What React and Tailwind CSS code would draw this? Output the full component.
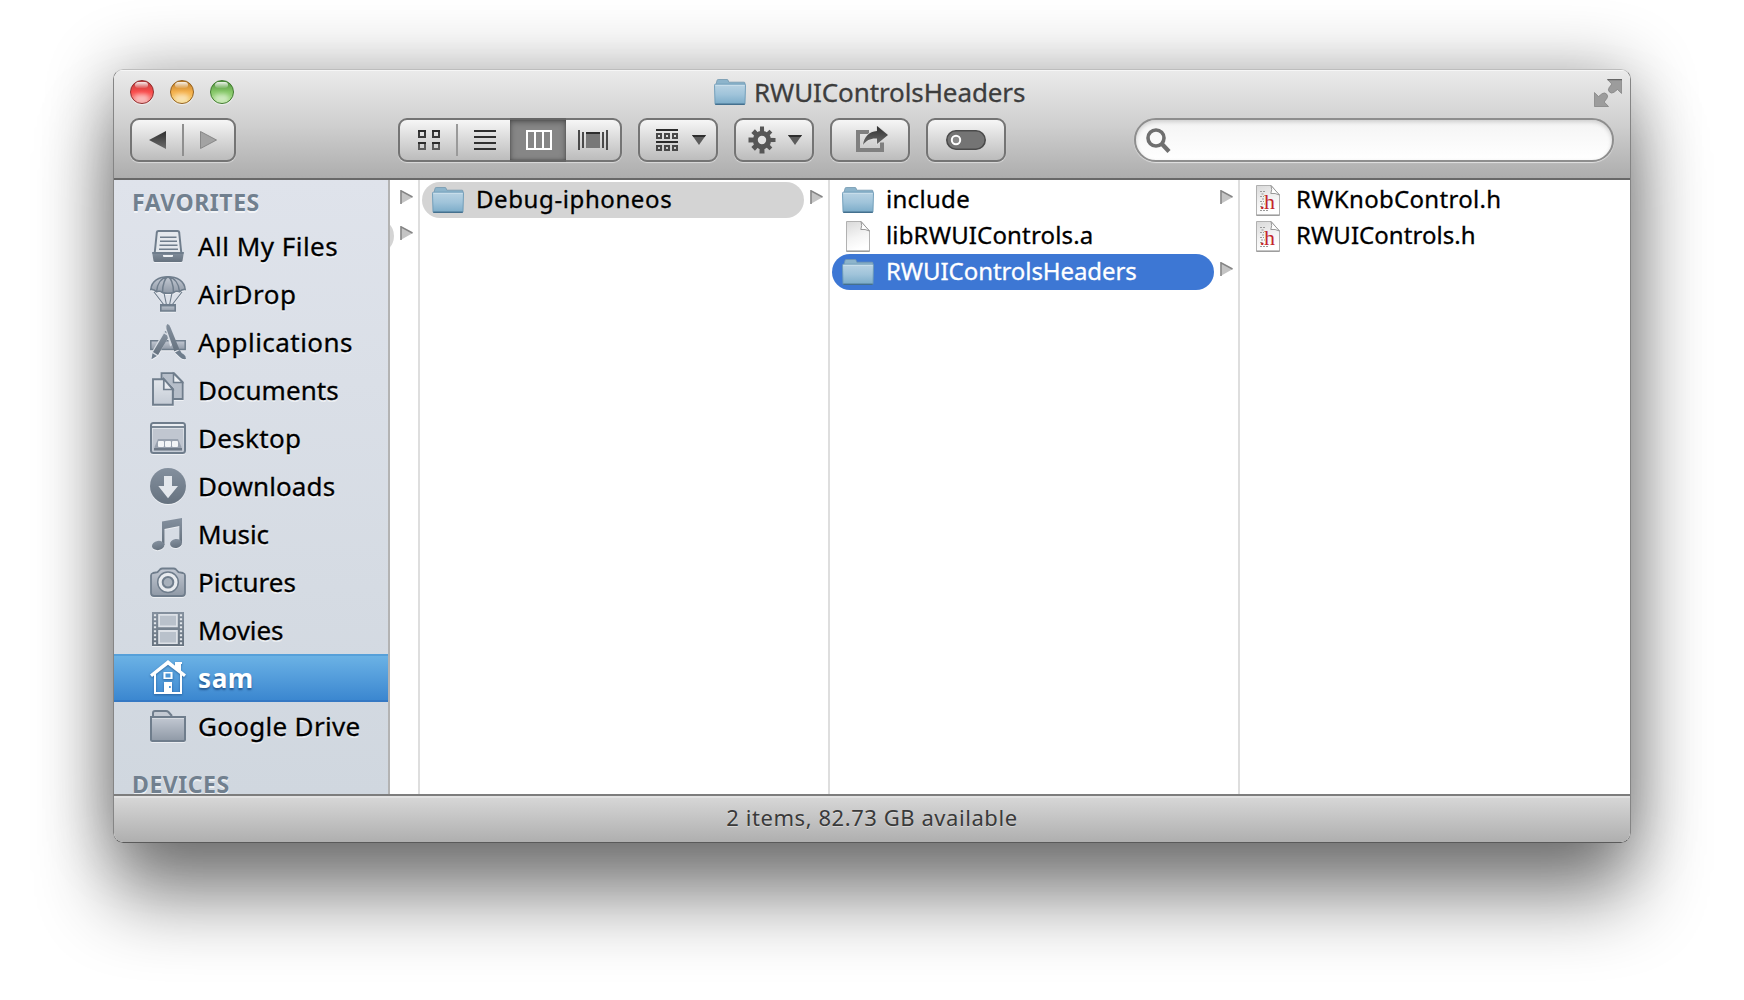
import React from "react";

const INK = "#6f7d8c";

/* ---------- sidebar icons ---------- */

function SideIcon({ children }) {
  return (
    <svg
      viewBox="0 0 36 36"
      className="size-9 shrink-0 overflow-visible drop-shadow-[0_1.5px_0_rgba(255,255,255,0.55)]"
      fill="none"
      stroke={INK}
      strokeWidth="2"
    >
      <defs>
        <linearGradient id="steel" x1="0" y1="0" x2="0" y2="1">
          <stop offset="0" stopColor="#c3c9d3" />
          <stop offset="1" stopColor="#8f99a6" />
        </linearGradient>
        <linearGradient id="ink" x1="0" y1="0" x2="0" y2="1">
          <stop offset="0" stopColor="#84909e" />
          <stop offset="1" stopColor="#66727f" />
        </linearGradient>
        <linearGradient id="pale" x1="0" y1="0" x2="0" y2="1">
          <stop offset="0" stopColor="#e3e7ec" />
          <stop offset="1" stopColor="#c4cbd5" />
        </linearGradient>
      </defs>
      {children}
    </svg>
  );
}

const AllFiles = () => (
  <SideIcon>
    <path d="M4.800 24 6.800 4.500Q7 3 8.500 3h19Q29 3 29.200 4.500L31.200 24" fill="#e4e8ed" />
    <path d="M10 9.200h16.500M10 13.200h17M9.500 17.200h18M9 21.200h19" strokeWidth="1.500" />
    <path d="M2 24h32l-1.500 9q-.2 1-1.500 1H5q-1.300 0-1.500-1z" fill="url(#ink)" stroke="none" />
    <path d="M2.500 25h31" />
    <path d="M13 27h10v1q0 1-1 1h-8q-1 0-1-1z" fill="#eef1f4" stroke="none" />
  </SideIcon>
);

const AirDrop = () => (
  <SideIcon>
    <path d="M4 16 14 29M14 17l2.500 12M22 17l-2.500 12M32 16 22 29" strokeWidth="1.200" />
    <path
      d="M.8 13.500C1.500 5 9 .8 18 .8S34.500 5 35.200 13.500q-2.700-.6-5.700 2.300-3.500-1.300-6 .8-5.500 1.400-11 0-2.500-2.100-6-.8-3-2.900-5.700-2.300z"
      fill="url(#steel)"
      strokeWidth="1.600"
    />
    <path d="M6.500 15.800C7 8 11 2 18 .8c7 1.200 11 7.200 11.500 15M12.500 16.600C12.500 8 15 2 18 .8c3 1.200 5.500 7.200 5.500 15.800" strokeWidth="1.500" />
    <path d="M10.800 29h14.400v6H10.800z" fill="url(#steel)" strokeWidth="1.600" />
    <path d="M10 29.200h16" strokeWidth="2.500" />
  </SideIcon>
);

const Applications = () => (
  <SideIcon>
    <path d="M.8 16.800h34.400v8.800H.8z" fill="url(#steel)" strokeWidth="1.500" />
    <path d="M13.500 7.500q2-2.300 5.500 1l1 2-12 21-6.600 4 .4-7.500z" fill="#d8dde4" stroke="none" />
    <path d="m14 9.500 5 3-11 18.500-5-3z" fill="url(#ink)" stroke="none" />
    <path d="M14.600 8q1.200-1.600 3.600-.4t1.600 3.700z" fill={INK} stroke="none" />
    <path d="m2.500 29.300 4.300 2.600-5.300 3.300z" fill={INK} stroke="none" />
    <path d="M16 1 24 18l-3 2z" fill="#d8dde4" stroke="#d8dde4" strokeWidth="3" />
    <path d="M17.300 0q2.200.4 3.200 3.500l8.700 21.300-4.800 2.600L16.500 5Q15.600 2 17.300 0z" fill="url(#ink)" stroke="none" />
    <path d="m25 28.600 4.900-2.600q1.200 3.300 4 4.600 2 1.500 2.100 4.400-3.500.7-6-1.800z" fill={INK} stroke="none" />
  </SideIcon>
);

const Documents = () => (
  <SideIcon>
    <path d="M11.500 7V1.200h12.500L32.700 10v17h-10V17L13 7.500z" fill="#b6bec9" strokeWidth="1.800" />
    <path d="M23.500 1.500v9h9z" fill="#eef1f4" strokeWidth="1.500" />
    <path d="M3 7.200h11L22.800 17v15.800H3z" fill="url(#pale)" strokeWidth="1.900" />
    <path d="M13.800 7v10.500h9z" fill="#e8ebf0" strokeWidth="1.700" />
  </SideIcon>
);

const Desktop = () => (
  <SideIcon>
    <rect x="1" y="3" width="34" height="30" rx="2.500" fill="url(#pale)" />
    <path d="M2 7h32" strokeWidth="1.800" />
    <path d="M2.500 5h31" stroke="#eef1f4" strokeWidth="1.600" />
    <rect x="3" y="9" width="30" height="22" fill="#c0c6d0" stroke="none" />
    <path d="M8 19h20l3.500 8v2h-27v-2z" fill="#98a1ae" stroke="none" />
    <path d="M4 28h28v2.500H4z" fill="#6f7a88" stroke="none" />
    <g fill="#f2f4f6" stroke="none">
      <rect x="8" y="21" width="6" height="6" rx="1" />
      <rect x="15" y="21" width="6" height="6" rx="1" />
      <rect x="22" y="21" width="6" height="6" rx="1" />
    </g>
  </SideIcon>
);

const Downloads = () => (
  <SideIcon>
    <circle cx="18" cy="18" r="18" fill="url(#ink)" stroke="none" />
    <path d="M14 8h8v10h6L18 30.200 8.300 18H14z" fill="#e3e7ec" stroke="none" />
  </SideIcon>
);

const Music = () => (
  <SideIcon>
    <g fill="url(#ink)" stroke="none">
      <path d="M12 5.500 32 2v7.500L14.500 13v16H12z" />
      <path d="M29.300 4H32v23h-2.700z" />
      <ellipse cx="8.200" cy="29.500" rx="6.300" ry="4.600" transform="rotate(-8 8.200 29.500)" />
      <ellipse cx="26" cy="27.500" rx="6" ry="4.500" transform="rotate(-8 26 27.500)" />
    </g>
  </SideIcon>
);

const Pictures = () => (
  <SideIcon>
    <path
      d="M1 11.500Q1 9.500 3 9l4.500-.8L10 5.500q1-1 2.500-1h11q1.500 0 2.500 1l2.500 2.700L33 9q2 .5 2 2.500V29q0 3-3 3H4q-3 0-3-3z"
      fill="url(#steel)"
      strokeWidth="1.800"
    />
    <circle cx="18" cy="18.300" r="10.300" fill="#e8ebef" strokeWidth="1.500" />
    <circle cx="18" cy="18.300" r="5.300" fill="#a7b0bb" />
  </SideIcon>
);

const Movies = () => (
  <SideIcon>
    <path d="M2 0h32v34H2z" fill="url(#ink)" stroke="none" />
    <path d="M8.200 2h19.600v13.300H8.200zM8.200 18h19.600v14H8.200z" fill="#dde1e7" stroke="none" />
    <path d="M10 3.700h16v9.800H10zM10 20h16v10.500H10z" fill="#b9c1cb" stroke="none" />
    <path d="M5 2.200V33M31 2.200V33" stroke="#e3e7ec" strokeWidth="2.200" strokeDasharray="2 2" />
  </SideIcon>
);

const House = () => (
  <svg viewBox="0 0 36 36" className="size-9 shrink-0 overflow-visible drop-shadow-[0_1px_1px_rgba(0,40,90,0.45)]" fill="#fff">
    <path d="M25 2h7v2h-1v8l-6-5z" />
    <path d="M18 0 36 14.500l-2 2.500L18 4.800 2 17 0 14.500z" />
    <path d="M4 15l2-1.500V32h8V22h8v10h8V13.500l2 1.500v19H4z" />
    <path d="M14 22h8v10h-8z" />
    <path d="M19 26h1.800v2H19z" fill="#4d95d6" />
    <path d="M13 12h10v7H13z" />
    <path d="M15.500 13.500h5v4h-5z" fill="#4c96d7" />
    <path d="M13 12h1v7h-1zM22 12h1v7h-1z" fill="#a9cdec" />
  </svg>
);

const GreyFolder = () => (
  <SideIcon>
    <path d="M3 9V5q0-2 2-2h11q1.500 0 2.500 1l3.500 4" fill="#c3c9d2" />
    <path d="M1 9h34v22.500q0 1.500-1.500 1.500h-31Q1 33 1 31.500z" fill="url(#steel)" />
    <path d="M2 10.500h32" stroke="#d6dbe1" strokeWidth="1" />
  </SideIcon>
);

/* ---------- file icons ---------- */

const Folder = ({ className = "" }) => (
  <svg viewBox="0 0 32 27" className={"h-[27px] w-8 shrink-0 " + className}>
    <defs>
      <linearGradient id="blueFront" x1="0" y1="0" x2="0" y2="1">
        <stop offset="0" stopColor="#b9d3e3" />
        <stop offset="0.500" stopColor="#a0c4da" />
        <stop offset="1" stopColor="#7aabc8" />
      </linearGradient>
    </defs>
    <path d="M2 8V5.500L3 1.500q.2-1 1.200-1H13q1 0 1.200 1l.6 1.700H30q1 0 1 1V8z" fill="#8db4cb" stroke="#7498ae" strokeWidth="0.800" />
    <path d="M.5 6.200q0-1 1-1h29q1 0 1 1L31 24.500q0 1-1 1H2q-1 0-1-1z" fill="url(#blueFront)" stroke="#6b9ab7" strokeWidth="0.900" />
    <path d="M1.300 25.300h29.400" stroke="#44708e" strokeWidth="1.400" />
    <path d="M1.500 6.300h29" stroke="#d2e5f0" strokeWidth="0.800" />
  </svg>
);

const Page = ({ header }) => (
  <svg viewBox="0 0 24 31" className="mx-1 h-[31px] w-6 shrink-0">
    <defs>
      <linearGradient id="paper" x1="0" y1="0" x2="0.300" y2="1">
        <stop offset="0" stopColor="#d9d9d9" />
        <stop offset="0.600" stopColor="#f4f4f4" />
        <stop offset="1" stopColor="#fff" />
      </linearGradient>
    </defs>
    <path d="M.5.500h14.500L23.500 10v20H.5z" fill="url(#paper)" stroke="#a9a9a9" strokeWidth="0.900" />
    <path d="M.3 30.300h23.400" stroke="#8a8a8a" strokeWidth="1.100" />
    <path d="M15 .5q1.500 4-.2 8 4.200-.7 8.700 1.500Z" fill="#fff" stroke="#8f8f8f" strokeWidth="0.900" />
    {header && (
      <>
        <path d="M4 6.500h5M5.500 9h3M4 11.500h4M6 14h3M4 16.500h4M5 19h4M4 21.500h3M4 25.500h8" stroke="#999" strokeWidth="1" strokeDasharray="2 1" />
        <text x="3.500" y="24" fontSize="22" fontFamily="Liberation Serif, serif" fill="#c3262c" textLength="15.500">
          .h
        </text>
      </>
    )}
  </svg>
);

const Disclosure = ({ hidden }) => (
  <svg viewBox="0 0 13 14" className={hidden ? "invisible h-3.5 w-[13px] shrink-0" : "relative -top-[3px] h-3.5 w-[13px] shrink-0"}>
    <path d="M.5 0 13 7 .5 14z" fill="#c4c4c4" />
    <path d="M1 14V.8L12.500 7" fill="none" stroke="#858585" strokeWidth="1.500" />
  </svg>
);

/* ---------- toolbar ---------- */

const BTN =
  "flex h-11 shrink-0 items-center rounded-[9px] border-2 border-[#747474] bg-linear-to-b from-[#f6f6f6] to-[#bcbcbc] shadow-[0_1px_1px_rgba(255,255,255,0.5)]";

const DarkFill = () => (
  <defs>
    <linearGradient id="dark" x1="0" y1="0" x2="0" y2="1">
      <stop offset="0" stopColor="#2e2e2e" />
      <stop offset="1" stopColor="#6e6e6e" />
    </linearGradient>
  </defs>
);

const Caret = () => (
  <svg viewBox="0 0 14 10" className="h-2.5 w-3.5">
    <path d="M0 0h14L7 10z" fill="#5c5c5c" />
    <path d="M0 0h14l-1.400 2H1.400z" fill="#2e2e2e" />
  </svg>
);

function TrafficLight({ className }) {
  return (
    <span className={"relative block size-6 overflow-hidden rounded-full border-[1.500px] shadow-[0_1px_1px_rgba(255,255,255,0.6)] " + className}>
      <span className="absolute top-[1px] left-[4px] h-[6px] w-[13px] rounded-full bg-linear-to-b from-white/90 to-white/10" />
      <span className="absolute bottom-0 left-[3px] h-[9px] w-[15px] rounded-full bg-white/50 blur-[2px]" />
    </span>
  );
}

function ViewSwitcher() {
  return (
    <div className={BTN + " w-56"}>
      <div className="flex h-full w-14 items-center justify-center">
        <svg viewBox="0 0 22 20" className="relative left-px h-5 w-[22px]" fill="none" strokeWidth="2">
          <path d="M1 1h6v6H1zM15 1h6v6h-6z" stroke="#3a3a3a" />
          <path d="M1 13h6v6H1zM15 13h6v6h-6z" stroke="#5a5a5a" />
          <path d="M0 1h8M14 1h8M0 13h8M14 13h8" stroke="#2b2b2b" />
        </svg>
      </div>
      <div className="h-8 w-0.5 bg-[#9a9a9a]" />
      <div className="flex h-full w-[52px] items-center justify-center">
        <svg viewBox="0 0 22 20" className="relative left-px h-5 w-[22px]" stroke="#2f2f2f" strokeWidth="2">
          <path d="M0 1h22M0 7h22M0 13h22M0 19h22" />
        </svg>
      </div>
      <div className="flex h-11 w-14 items-center justify-center border-y-2 border-[#666] bg-[#868686] shadow-[inset_0_2px_6px_rgba(0,0,0,0.35),inset_0_0_3px_rgba(0,0,0,0.3)]">
        <svg viewBox="0 0 26 20" className="relative left-px h-5 w-[26px]" fill="none" stroke="#fff" strokeWidth="2">
          <path d="M1 1h24v18H1zM9 1v18M17 1v18" />
        </svg>
      </div>
      <div className="flex h-full flex-1 items-center justify-center">
        <svg viewBox="0 0 30 20" className="h-5 w-[30px]">
          <path d="M0 0h2v20H0zM4 2h2v16H4zM24 2h2v16h-2zM28 0h2v20h-2z" fill="#4a4a4a" />
          <path d="M8 2h14v16H8z" fill="#787878" />
          <path d="M8 2h14v2H8z" fill="#2e2e2e" />
        </svg>
      </div>
    </div>
  );
}

function Toolbar() {
  return (
    <header className="h-[110px] border-b-2 border-[#686868] bg-linear-to-b from-[#ebebeb] via-[#d0d0d0] to-[#adadad] shadow-[inset_0_1px_0_#f6f6f6]">
      <div className="flex h-12 items-start pl-4">
        <div className="flex gap-4 pt-[10px]">
          <TrafficLight className="border-[#8f2b2b] bg-linear-to-b from-[#b84040] via-[#fa4a4a] to-[#f08a8a]" />
          <TrafficLight className="border-[#93601e] bg-linear-to-b from-[#b87a28] via-[#f5b04b] to-[#f2d070]" />
          <TrafficLight className="border-[#3f7a2e] bg-linear-to-b from-[#4f8f3c] via-[#86c868] to-[#a8dc8a]" />
        </div>
        <div className="ml-[480px] flex items-start">
          <Folder className="mt-[9px]" />
          <h1 className="ml-2 text-[26px] leading-[44px] tracking-[-0.100px] whitespace-nowrap text-[#3d3d3d] [-webkit-text-stroke:0.300px_#3d3d3d]">
            RWUIControlsHeaders
          </h1>
        </div>
        <svg viewBox="0 0 28 28" className="mt-[9px] mr-2 ml-auto size-7" fill="#9c9c9c" stroke="#7c7c7c" strokeWidth="0.700">
          <path d="M13.500.5H27.600V14.500L23.500 10.500 20 13.300Q17.300 15 15.400 13T15 8.800L17.800 5z" />
          <path d="M13.500.500H28" stroke="#666" strokeWidth="1.400" />
          <path d="M13.500.5H27.600V14.500L23.500 10.500 20 13.300Q17.300 15 15.400 13T15 8.800L17.800 5z" transform="rotate(180 14 14)" />
        </svg>
      </div>
      <div className="flex gap-4 pl-4">
        <div className={BTN + " w-[106px]"}>
          <div className="flex flex-1 justify-center">
            <svg viewBox="0 0 17 18" className="h-[18px] w-[17px]">
              <DarkFill />
              <path d="M0 9 17 0v18z" fill="url(#dark)" />
            </svg>
          </div>
          <div className="h-8 w-0.5 bg-[#8f8f8f]" />
          <div className="flex w-[50px] justify-center pr-0.5">
            <svg viewBox="0 0 17 18" className="h-[18px] w-[17px]">
              <path d="M.5.500 16.500 9l-16 8.500z" fill="#a3a3a3" stroke="#828282" strokeWidth="0.900" />
            </svg>
          </div>
        </div>
        <div className="ml-[146px] flex gap-4">
          <ViewSwitcher />
          <div className={BTN + " w-20 justify-between pr-[10px] pl-4"}>
            <svg viewBox="0 0 22 22" className="h-[22px] w-[22px]" fill="none" stroke="#484848" strokeWidth="2">
              <path d="M0 1h22M0 13h22" stroke="#2b2b2b" />
              <path d="M1 5h4v4H1zM9 5h4v4H9zM17 5h4v4h-4zM1 17h4v4H1zM9 17h4v4H9zM17 17h4v4h-4z" />
            </svg>
            <Caret />
          </div>
          <div className={BTN + " w-20 justify-between pr-[10px] pl-3"}>
            <svg viewBox="-14 -14 28 28" className="size-7">
              <g fill="#565656">
                <path d="M-2-13.500h4L2.500 13.500h-5z" />
                <path d="M-2-13.500h4L2.500 13.500h-5z" transform="rotate(45) scale(1 .93)" />
                <path d="M-2-13.500h4L2.500 13.500h-5z" transform="rotate(90)" />
                <path d="M-2-13.500h4L2.500 13.500h-5z" transform="rotate(135) scale(1 .93)" />
              </g>
              <circle r="6.700" fill="#e2e2e2" stroke="#565656" strokeWidth="5" />
            </svg>
            <Caret />
          </div>
          <div className={BTN + " w-20 justify-center"}>
            <svg viewBox="0 0 32 26" className="relative -top-px left-[2px] h-[26px] w-8">
              <path d="M13 6H2v18h24v-7.500" fill="none" stroke="#808080" strokeWidth="4" />
              <path d="M7 19C8 11 13 5.500 21 5V0l11 9-11 9v-5.500C15 12 10.500 14 7 19z" fill="url(#dark)" stroke="#dcdcdc" strokeWidth="1.500" paintOrder="stroke" />
            </svg>
          </div>
          <div className={BTN + " w-20 justify-center"}>
            <svg viewBox="0 0 40 20" className="h-5 w-10">
              <rect x="0.800" y="0.800" width="38.400" height="18.400" rx="9.200" fill="#747474" stroke="#4a4a4a" strokeWidth="1.600" />
              <circle cx="10" cy="10" r="4.200" fill="#8a8a8a" stroke="#fff" strokeWidth="2" />
            </svg>
          </div>
        </div>
        <div className="ml-28 flex h-11 w-[480px] items-center rounded-full border-2 border-[#8e8e8e] bg-linear-to-b from-[#f4f4f4] to-white pl-[10px] shadow-[inset_0_2px_4px_rgba(0,0,0,0.16),0_1px_1px_rgba(255,255,255,0.6)]">
          <svg viewBox="0 0 25 25" className="size-[25px]" fill="none" stroke="#6f6f6f">
            <circle cx="10" cy="10" r="8" strokeWidth="3.600" />
            <path d="m15.500 15.500 7.500 8" strokeWidth="4.200" />
          </svg>
        </div>
      </div>
    </header>
  );
}

/* ---------- sidebar ---------- */

const places = [
  { name: "All My Files", Icon: AllFiles, text: "tracking-[0.480px]" },
  { name: "AirDrop", Icon: AirDrop, text: "tracking-[0.520px]" },
  { name: "Applications", Icon: Applications, text: "tracking-[0.460px]" },
  { name: "Documents", Icon: Documents, text: "tracking-[0.080px]" },
  { name: "Desktop", Icon: Desktop, text: "tracking-[0.320px]" },
  { name: "Downloads", Icon: Downloads, text: "tracking-[0.120px]" },
  { name: "Music", Icon: Music, text: "tracking-[-0.060px]" },
  { name: "Pictures", Icon: Pictures, text: "tracking-[0.020px]" },
  { name: "Movies", Icon: Movies, text: "tracking-[-0.070px]" },
  { name: "sam", Icon: House, text: "tracking-[0.600px]", selected: true },
  { name: "Google Drive", Icon: GreyFolder, text: "tracking-[0.300px]" },
];

const Heading = ({ children }) => (
  <h2 className="h-[42px] pl-[18px] text-[23px] leading-[45px] font-bold tracking-[0.540px] text-[#71808f] [text-shadow:0_2px_0_rgba(255,255,255,0.65)]">
    {children}
  </h2>
);

function Sidebar() {
  return (
    <nav className="w-[276px] shrink-0 overflow-hidden border-r-2 border-[#b3b3b3] bg-linear-to-b from-[#dfe3eb] to-[#d0d7df]">
      <Heading>FAVORITES</Heading>
      <ul>
        {places.map(({ name, Icon, text, selected }) => (
          <li
            key={name}
            className={
              selected
                ? "flex h-12 items-center gap-3 border-y-2 border-t-[#56a0d9] border-b-[#3579c4] bg-linear-to-b from-[#6bb2e5] to-[#3b87d0] pl-9 font-bold text-white [text-shadow:0_2px_2px_rgba(0,30,80,0.5)]"
                : "flex h-12 items-center gap-3 pl-9 text-black [-webkit-text-stroke:0.300px_#000] [text-shadow:0_2px_0_rgba(255,255,255,0.55)]"
            }
          >
            <Icon />
            <span className={"text-[26px] leading-[48px] whitespace-nowrap " + text}>{name}</span>
          </li>
        ))}
      </ul>
      <div className="pt-3">
        <Heading>DEVICES</Heading>
      </div>
    </nav>
  );
}

/* ---------- browser columns ---------- */

function Row({ name = "", icon, text = "", tone = "", arrow = false }) {
  return (
    <div className="flex h-9 w-[408px] shrink-0 items-center gap-1.5 pl-0.5">
      <div className={"flex h-9 w-[382px] shrink-0 items-center rounded-full pl-2.5 " + tone}>
        {icon}
        <span className={"-mt-0.5 ml-3 text-[24px] leading-[34px] whitespace-nowrap [-webkit-text-stroke:0.300px_currentColor] " + text}>{name}</span>
      </div>
      <Disclosure hidden={!arrow} />
    </div>
  );
}

function Browser() {
  return (
    <main className="flex min-w-0 flex-1 bg-white text-black">
      <section className="flex w-[30px] shrink-0 flex-col items-end overflow-hidden border-r-2 border-[#dedede] pt-0.5">
        <Row arrow />
        <Row arrow tone="bg-[#d4d4d4]" />
      </section>
      <section className="w-[410px] shrink-0 border-r-2 border-[#dedede] pt-0.5">
        <Row arrow name="Debug-iphoneos" icon={<Folder />} tone="bg-[#d4d4d4]" text="tracking-[0.600px]" />
      </section>
      <section className="w-[410px] shrink-0 border-r-2 border-[#dedede] pt-0.5">
        <Row arrow name="include" icon={<Folder />} text="tracking-[0.300px]" />
        <Row name="libRWUIControls.a" icon={<Page />} text="tracking-[0.150px]" />
        <Row arrow name="RWUIControlsHeaders" icon={<Folder />} tone="bg-[#3d77d4]" text="tracking-[-0.080px] text-white" />
      </section>
      <section className="min-w-0 flex-1 overflow-hidden pt-0.5">
        <Row name="RWKnobControl.h" icon={<Page header />} text="tracking-[0.300px]" />
        <Row name="RWUIControls.h" icon={<Page header />} text="tracking-[0.040px]" />
      </section>
    </main>
  );
}

export default function App() {
  return (
    <div className="h-[1000px] w-[1744px] overflow-hidden bg-white pt-[69px] pl-[113px] font-['Noto_Sans',sans-serif]">
      <div className="flex h-[774px] w-[1518px] flex-col overflow-hidden rounded-[10px] border border-t-[#bdbdbd] border-r-[#858585] border-b-[#5a5a5a] border-l-[#858585] shadow-[0_56px_76px_rgba(0,0,0,0.46),0_0_68px_rgba(0,0,0,0.32)]">
        <Toolbar />
        <div className="flex h-[614px] shrink-0">
          <Sidebar />
          <Browser />
        </div>
        <footer className="min-h-0 flex-1 border-t-2 border-[#7d7d7d] bg-linear-to-b from-[#d8d8d8] to-[#afafaf] text-center text-[22px] leading-[42px] tracking-[0.560px] text-[#3a3a3a] shadow-[inset_0_2px_0_#e2e2e2] [text-shadow:0_1px_0_rgba(255,255,255,0.4)]">
          2 items, 82.73 GB available
        </footer>
      </div>
    </div>
  );
}
